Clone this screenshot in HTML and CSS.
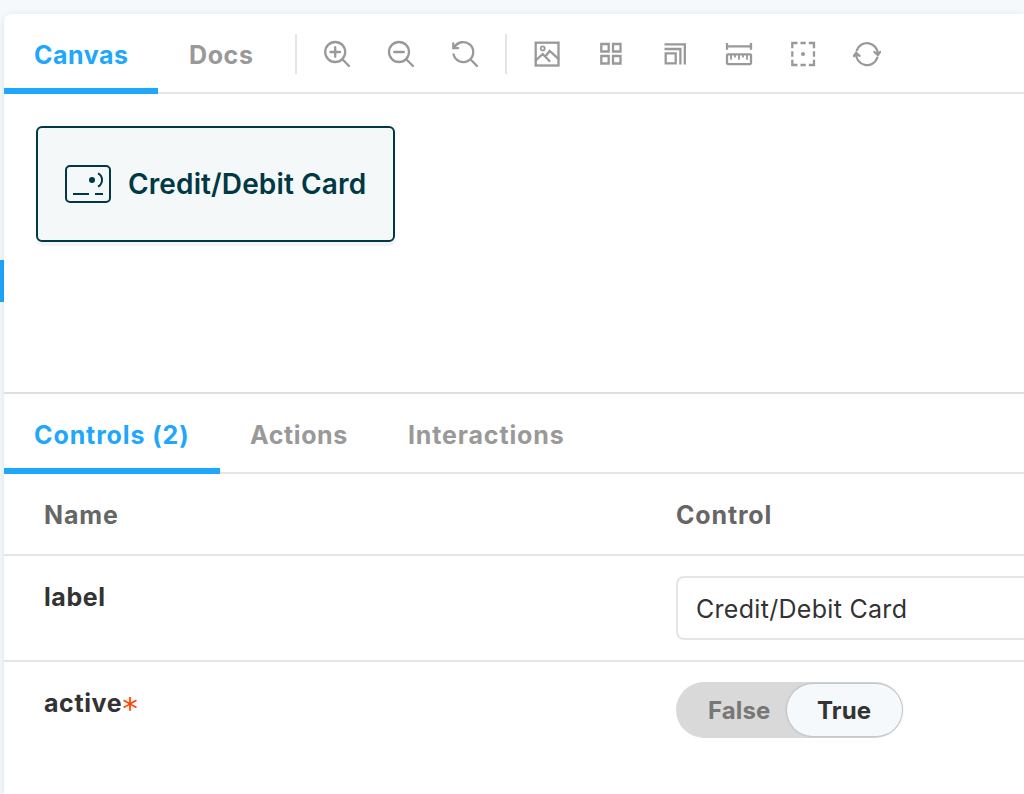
FILE: index.html
```html
<!DOCTYPE html>
<html lang="en">
<head>
<meta charset="utf-8">
<title>Storybook</title>
<link rel="stylesheet" href="styles.css">
</head>
<body>
<div class="app">
  <aside class="sidebar"><div class="selected-story"></div></aside>
  <main class="preview">
    <header class="bar toolbar">
      <button class="tab tab-canvas active">Canvas</button>
      <button class="tab tab-docs">Docs</button>
      <span class="separator"></span>
      <div class="tools">
        <svg class="icon" viewBox="0 0 28 28"><circle cx="12.2" cy="12" r="10"/><path d="M19.4 19.3L26 26M7.4 12H17M12.2 7.2V16.8"/></svg>
        <svg class="icon" viewBox="0 0 28 28"><circle cx="12" cy="12" r="10"/><path d="M19.2 19.3L26 26M7.2 12H16.8"/></svg>
        <svg class="icon" viewBox="0 0 28 28"><path d="M2.5 14.3A10 10 0 1 0 3.2 7.8M19.4 19.3L26 26M2.3 3.3V8.1H7.1M2.5 7.9L5 5.2"/></svg>
      </div>
      <span class="separator"></span>
      <div class="tools">
        <svg class="icon" viewBox="0 0 28 28"><rect x="2.7" y="2.7" width="22.8" height="22.8"/><circle class="thin" cx="9.7" cy="8.4" r="2"/><path d="M2.7 20.5L9.7 14L16.5 21M12.5 16.2L16.7 11L25.5 18.8"/></svg>
        <svg class="icon" viewBox="0 0 28 28"><path d="M4.3 4H11.7V11.5H4.3ZM16 4H23.5V11.5H16ZM4.3 16H11.7V23.5H4.3ZM16 16H23.5V23.5H16Z"/></svg>
        <svg class="icon flat" viewBox="0 0 28 28"><path d="M3.5 4.3H23.8V24.4M3.5 9H19.4V24.4M4.7 13.4H14.7V23.4H4.7Z"/></svg>
        <svg class="icon flat" viewBox="0 0 28 28"><path d="M2 3V9.8M26 3V9.8M2 6.4H26"/><rect x="2" y="14.3" width="24" height="9.8" rx="1"/><path class="thin" d="M6 15V19.8M10 15V17.4M14 15V19.8M18 15V17.4M22 15V19.8"/></svg>
        <svg class="icon flat" viewBox="0 0 28 28"><path d="M3.3 8.2V3H8.5M11.5 3H16.8M19.8 3H25V8.2M25 11.3V16.7M25 19.8V25H19.8M16.8 25H11.5M8.5 25H3.3V19.8M3.3 16.7V11.3"/><circle class="dot" cx="14" cy="14" r="2"/></svg>
        <svg class="icon" viewBox="0 0 28 28"><path d="M3.8 10.4A10.8 10.8 0 0 1 24.8 14.4M21.4 12L24.9 15L27.2 12M24.2 17.8A10.8 10.8 0 0 1 3.2 13.6M.9 16L3.1 12.9L6.6 15.8"/></svg>
      </div>
    </header>
    <section class="canvas">
      <div class="card">
        <svg class="card-icon" viewBox="0 0 46 38"><rect x="1" y="1" width="44" height="36" rx="4"/><circle class="card-dot" cx="27" cy="15" r="3"/><path d="M33 8.4Q37 10.4 37 15T33 21.6M8 29H24M30 29H38"/></svg>
        <span>Credit/Debit Card</span>
      </div>
    </section>
    <section class="addons">
      <nav class="bar">
        <button class="tab tab-controls active">Controls (2)</button>
        <button class="tab tab-actions">Actions</button>
        <button class="tab tab-interactions">Interactions</button>
      </nav>
      <div class="row head"><div>Name</div><div>Control</div></div>
      <div class="row label-row"><div class="name">label</div><div class="input">Credit/Debit Card</div></div>
      <div class="row active-row"><div class="name">active<span class="required">*</span></div>
        <div class="toggle"><span class="off">False</span><span class="on">True</span></div>
      </div>
    </section>
  </main>
</div>
</body>
</html>
```
FILE: styles.css
```css
* { box-sizing: border-box; }
body {
  margin: 0;
  height: 794px;
  overflow: hidden;
  background: #f5f9fc;
  color: #333;
  font-family: Inter, "Liberation Sans", sans-serif;
  font-size: 25px;
  font-weight: 700;
  letter-spacing: .6px;
}
.app { display: flex; height: 794px; padding-top: 14px; }
.sidebar { width: 4px; flex: none; padding-top: 246px; }
.selected-story { height: 42px; background: #1ea7fd; }
.preview {
  flex: 1;
  min-width: 0;
  background: #fff;
  border-top-left-radius: 8px;
  box-shadow: 0 2px 10px rgba(0, 0, 0, .1);
}
.bar {
  display: flex;
  height: 80px;
  box-shadow: inset 0 -2px #e5e5e5;
}
.toolbar { align-items: center; }
.tab {
  height: 80px;
  padding: 7px 0 0 30px;
  border: 0;
  border-bottom: 6px solid transparent;
  background: none;
  color: #999;
  font: inherit;
  letter-spacing: inherit;
  text-align: left;
  white-space: nowrap;
  flex: none;
}
.tab.active { color: #1ea7fd; border-color: #1ea7fd; }
.tab-canvas { width: 154px; letter-spacing: .5px; }
.tab-docs { width: 137px; padding-left: 31px; }
.tab-controls { width: 216px; letter-spacing: .9px; }
.tab-actions { width: 158px; }
.tab-interactions { letter-spacing: .85px; }
.separator { width: 2px; height: 40px; background: #e5e5e5; }
.tools { display: flex; gap: 36px; padding: 0 26px; }
.icon {
  width: 28px;
  height: 28px;
  fill: none;
  stroke: #999;
  stroke-width: 2.3;
  stroke-linecap: round;
}
.icon.flat { stroke-linecap: butt; }
.icon .thin { stroke-width: 1.8; }
.icon .dot { fill: #999; stroke: none; }
.canvas { height: 298px; padding: 32px; }
.card {
  display: flex;
  align-items: center;
  gap: 17px;
  width: 359px;
  height: 116px;
  padding-left: 27px;
  border: 2px solid #003845;
  border-radius: 6px;
  background: #f4f8f9;
  box-shadow: 0 4px #f3f3f4;
  color: #003845;
  font-size: 28px;
  font-weight: 600;
  letter-spacing: .12px;
  white-space: nowrap;
}
.card-icon { width: 46px; height: 38px; fill: none; stroke: #003845; stroke-width: 2; }
.card-icon .card-dot { fill: #003845; stroke: none; }
.addons { border-top: 2px solid #dbe0e4; }
.row {
  display: grid;
  grid-template-columns: 632px 1fr;
  padding-left: 40px;
  border-bottom: 2px solid #e5e5e5;
}
.head { height: 82px; padding-top: 2px; align-items: center; color: #666; letter-spacing: .85px; }
.label-row { height: 106px; padding-top: 20px; }
.active-row { border: 0; padding-top: 20px; }
.name { height: 42px; line-height: 42px; }
.input {
  height: 64px;
  padding-left: 18px;
  border: 2px solid #e5e5e5;
  border-right: 0;
  border-radius: 8px 0 0 8px;
  font-weight: 400;
  letter-spacing: .3px;
  line-height: 63px;
}
.required {
  margin-left: -1.5px;
  color: #ff4400;
  font: 400 31px/1 "DejaVu Sans Mono", monospace;
  letter-spacing: 0;
  vertical-align: -7px;
}
.toggle {
  display: flex;
  width: 227px;
  height: 56px;
  padding: 2px 1px 2px 0;
  border-radius: 28px;
  background: #d9d9d9;
  font-size: 24px;
  letter-spacing: .1px;
  line-height: 54px;
}
.off { width: 111px; padding-left: 32px; color: #777; }
.on {
  width: 115px;
  padding-left: 30px;
  border-radius: 27px;
  background: #f5f9fc;
  box-shadow: 0 0 2px 1px rgba(0, 0, 0, .12);
}
```
